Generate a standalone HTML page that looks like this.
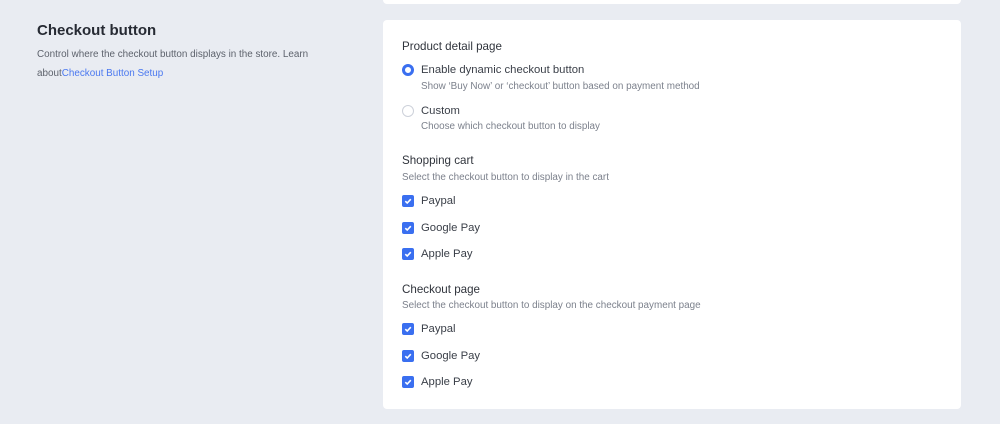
<!DOCTYPE html>
<html><head><style>
body{margin:0;width:1000px;height:424px;background:#e9ecf2;font-family:"Liberation Sans",sans-serif;position:relative;overflow:hidden;color:#2b2f38}
.a{position:absolute;white-space:nowrap}
.card{position:absolute;left:383px;width:578px;background:#fff;border-radius:4px}
.h{font-size:11.6px;color:#30343c}
.l{font-size:11.3px;color:#3a3f48}
.s{font-size:9.9px;color:#7c818c}
.cb{position:absolute;left:402px;width:12px;height:12px;background:#3a6ff0;border-radius:2px}
.cb svg{position:absolute;left:0;top:0}
.rd{position:absolute;left:402px;width:12px;height:12px;border-radius:50%;box-sizing:border-box}
</style></head><body>
<div class="card" style="top:-10px;height:14px"></div>
<div class="card" style="top:20px;height:389px"></div>
<div class="a" style="left:37px;top:22px;font-size:15px;font-weight:bold;color:#262a33">Checkout button</div>
<div class="a" style="left:37px;top:49px;font-size:9.9px;color:#5d626c">Control where the checkout button displays in the store. Learn</div>
<div class="a" style="left:37px;top:68px;font-size:9.9px;color:#5d626c">about<span style="color:#4a78f0">Checkout Button Setup</span></div>

<div class="a h" style="left:402px;top:40px">Product detail page</div>
<div class="rd" style="top:64px;border:3.5px solid #3a6ff0;background:#fff"></div>
<div class="a l" style="left:421px;top:64px">Enable dynamic checkout button</div>
<div class="a s" style="left:421px;top:81px">Show ‘Buy Now’ or ‘checkout’ button based on payment method</div>
<div class="rd" style="top:105px;border:1px solid #cdd1da"></div>
<div class="a l" style="left:421px;top:105px">Custom</div>
<div class="a s" style="left:421px;top:121px">Choose which checkout button to display</div>

<div class="a h" style="left:402px;top:154px">Shopping cart</div>
<div class="a s" style="left:402px;top:172px">Select the checkout button to display in the cart</div>
<div class="cb" style="top:195px"><svg width="12" height="12"><path d="M3.3 6.2l1.9 1.8 3.6-3.8" stroke="#fff" stroke-width="1.6" fill="none"/></svg></div>
<div class="a l" style="left:421px;top:195px">Paypal</div>
<div class="cb" style="top:222px"><svg width="12" height="12"><path d="M3.3 6.2l1.9 1.8 3.6-3.8" stroke="#fff" stroke-width="1.6" fill="none"/></svg></div>
<div class="a l" style="left:421px;top:222px">Google Pay</div>
<div class="cb" style="top:248px"><svg width="12" height="12"><path d="M3.3 6.2l1.9 1.8 3.6-3.8" stroke="#fff" stroke-width="1.6" fill="none"/></svg></div>
<div class="a l" style="left:421px;top:248px">Apple Pay</div>

<div class="a h" style="left:402px;top:283px">Checkout page</div>
<div class="a s" style="left:402px;top:300px">Select the checkout button to display on the checkout payment page</div>
<div class="cb" style="top:323px"><svg width="12" height="12"><path d="M3.3 6.2l1.9 1.8 3.6-3.8" stroke="#fff" stroke-width="1.6" fill="none"/></svg></div>
<div class="a l" style="left:421px;top:323px">Paypal</div>
<div class="cb" style="top:350px"><svg width="12" height="12"><path d="M3.3 6.2l1.9 1.8 3.6-3.8" stroke="#fff" stroke-width="1.6" fill="none"/></svg></div>
<div class="a l" style="left:421px;top:350px">Google Pay</div>
<div class="cb" style="top:376px"><svg width="12" height="12"><path d="M3.3 6.2l1.9 1.8 3.6-3.8" stroke="#fff" stroke-width="1.6" fill="none"/></svg></div>
<div class="a l" style="left:421px;top:376px">Apple Pay</div>
</body></html>
